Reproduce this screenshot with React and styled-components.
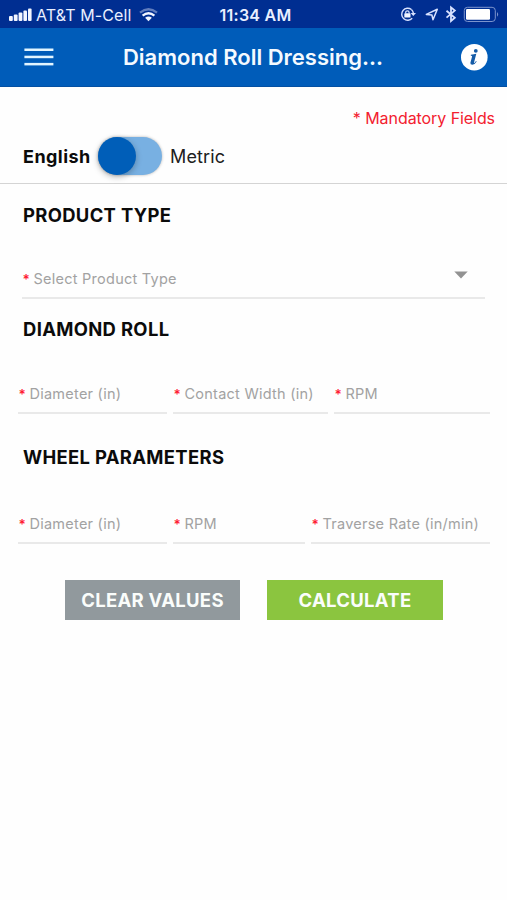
import React, { useState } from "react";
import styled, { createGlobalStyle } from "styled-components";

const GlobalStyle = createGlobalStyle`
  * { box-sizing: border-box; }
  body {
    margin: 0;
    background: #fefefe;
    color: #0b0b0b;
    font-family: Inter, "Liberation Sans", sans-serif;
  }
  button, input { font-family: inherit; }
`;

const Screen = styled.div`
  width: 507px;
  height: 900px;
  overflow: hidden;
  background: #fefefe;
`;

const StatusBar = styled.div`
  display: grid;
  grid-template-columns: 1fr auto 1fr;
  align-items: center;
  height: 28px;
  padding: 2px 7px 0 9px;
  background: #002e91;
  color: #e9efff;
`;

const StatusGroup = styled.div`
  display: flex;
  align-items: center;
  justify-content: ${(p) => (p.$end ? "flex-end" : "flex-start")};
`;

const Carrier = styled.span`
  margin: 0 8px 0 4px;
  font-size: 16px;
  line-height: 20px;
  letter-spacing: 0.1px;
  white-space: nowrap;
`;

const Clock = styled.span`
  padding-left: 2px;
  font-size: 16px;
  font-weight: 600;
  line-height: 20px;
  letter-spacing: 0.25px;
  white-space: nowrap;
`;

const Header = styled.header`
  display: flex;
  align-items: center;
  justify-content: space-between;
  height: 59px;
  padding: 0 19px 0 24px;
  background: #005cb9;
  border-bottom: 1px solid #0450a2;
  color: #f4faff;
`;

const IconButton = styled.button`
  display: flex;
  padding: 0;
  border: 0;
  background: none;
  color: inherit;
`;

const Title = styled.h1`
  margin: 0 8px 0 0;
  font-size: 22px;
  font-weight: 600;
  line-height: 30px;
  letter-spacing: 0;
  white-space: nowrap;
`;

const Notice = styled.p`
  height: 45px;
  margin: 0;
  padding: 21px 12px 0 0;
  color: #f3202f;
  font-size: 16px;
  line-height: 20px;
  letter-spacing: -0.07px;
  text-align: right;
`;

const UnitRow = styled.div`
  display: flex;
  align-items: center;
  height: 52px;
  padding: 0 0 4px 23px;
  border-bottom: 1px solid #d4d4d4;
`;

const UnitLabel = styled.span`
  width: ${(p) => (p.$strong ? "75px" : "auto")};
  padding-top: 2px;
  color: ${(p) => (p.$strong ? "#0b0b0b" : "#202020")};
  font-size: 18px;
  line-height: 24px;
  font-weight: ${(p) => (p.$strong ? 700 : 400)};
  letter-spacing: ${(p) => (p.$strong ? "0.45px" : "0.15px")};
`;

const Switch = styled.button`
  display: flex;
  justify-content: ${(p) => (p.$metric ? "flex-end" : "flex-start")};
  width: 64px;
  height: 38px;
  margin-right: 8px;
  padding: 0;
  border: 0;
  border-radius: 19px;
  background: #78b0e2;
  box-shadow: 0 0 3px rgba(0, 0, 0, 0.3);
`;

const Knob = styled.span`
  width: 38px;
  height: 38px;
  border-radius: 50%;
  background: #005eb8;
  box-shadow: 0 2px 6px rgba(0, 0, 0, 0.28);
`;

const Section = styled.section`
  height: ${(p) => p.$height}px;
  padding-top: ${(p) => p.$top}px;
`;

const SectionTitle = styled.h2`
  height: 24px;
  margin: 0 0 ${(p) => p.$gap}px 23px;
  font-size: 18.4px;
  font-weight: 650;
  line-height: 24px;
  letter-spacing: 0.35px;
`;

const FieldGrid = styled.div`
  display: grid;
  grid-template-columns: ${(p) => p.$columns};
  gap: 6px;
  margin-left: 18px;
`;

const Field = styled.label`
  display: flex;
  align-items: flex-start;
  height: 30px;
  border-bottom: 2px solid #e9e9e9;
  color: #a2a2a2;
  font-size: 14.5px;
  line-height: 20px;
  letter-spacing: 0.25px;
  white-space: nowrap;
`;

const SelectField = styled(Field)`
  width: 463px;
  margin-left: 22px;
  padding-right: 17px;
`;

const Required = styled.span`
  width: 11.5px;
  flex: none;
  padding-left: 0.5px;
  color: #ff1831;
  font-size: 13.5px;
  font-weight: 600;
  letter-spacing: 0;
`;

const Caret = styled.svg`
  margin: 2px 0 0 auto;
`;

const Actions = styled.div`
  display: flex;
  gap: 27px;
  margin-left: 65px;
`;

const ActionButton = styled.button`
  width: ${(p) => (p.$primary ? 176 : 175)}px;
  height: 40px;
  padding: 0;
  border: 0;
  background: ${(p) => (p.$primary ? "#8bc53f" : "#91999d")};
  color: #fafdfb;
  font-size: 18.5px;
  font-weight: 650;
  line-height: 41px;
  letter-spacing: 0.28px;
  white-space: nowrap;
`;

const Signal = () => (
  <svg width="23" height="14" viewBox="0 0 23 14" fill="#f2f6ff">
    <rect x="0" y="8" width="3.8" height="5" rx="1" />
    <rect x="4.8" y="6.5" width="3.8" height="6.5" rx="1" />
    <rect x="9.6" y="4.5" width="3.8" height="8.5" rx="1" />
    <rect x="14.4" y="2.5" width="3.6" height="10.5" rx="1" />
    <rect x="19" y="0.5" width="3.6" height="12.5" rx="1" />
  </svg>
);

const Wifi = () => (
  <svg width="19" height="14" viewBox="0 0 19 14" fill="none" stroke="#f2f6ff" strokeWidth="2.3">
    <path d="M1 4.6Q9.5-2 18 4.6" opacity="0.4" />
    <path d="M3.6 7.6Q9.5 2.8 15.4 7.6" />
    <path d="M6.1 9.8Q9.5 7 12.9 9.8L9.5 13.2Z" fill="#f2f6ff" stroke="none" />
  </svg>
);

const DeviceIcons = () => (
  <svg width="100" height="20" viewBox="400 5 100 20" fill="none" stroke="#d8e2ff">
    <path d="M411.4 9.5A6 6 0 1 0 412.2 18.2" strokeWidth="1.4" />
    <path d="M411.4 9.5A6 6 0 0 1 413.4 13.4" strokeWidth="1.4" />
    <path d="M410.6 13h5.4l-2.7 3.1z" fill="#d8e2ff" stroke="none" />
    <rect x="404.3" y="13.3" width="6.2" height="4.3" rx="0.6" fill="#f2f6ff" stroke="none" />
    <path d="M405.7 13.8v-1.3a1.7 1.7 0 0 1 3.4 0V13.8" strokeWidth="1.2" />
    <path d="M426.3 14.4L437.3 9.3L433 19.8L431.9 15Z" strokeWidth="1.5" strokeLinejoin="round" />
    <path d="M446.5 10.8L454.8 17.8L451 21V7.4L454.8 10.6L446.5 17.6" strokeWidth="1.8" />
    <rect x="464.3" y="7.3" width="31" height="14.2" rx="3.2" stroke="#7c94cd" strokeWidth="1" />
    <rect x="466" y="9.1" width="24" height="10.7" rx="1.2" fill="#fff" stroke="none" />
    <path d="M497 12q2.4 2.4 0 4.8z" fill="#7c94cd" stroke="none" />
  </svg>
);

const MenuIcon = () => (
  <svg width="30" height="20" viewBox="0 0 30 20" fill="#e2f5ff">
    <rect x="0.4" y="1.5" width="29" height="2.5" />
    <rect x="0.4" y="8.7" width="29" height="2.5" />
    <rect x="0.4" y="15.9" width="29" height="2.5" />
  </svg>
);

const InfoIcon = () => (
  <svg width="28" height="28" viewBox="0 0 28 28">
    <circle cx="14.3" cy="14.2" r="13.3" fill="#fff" />
    <ellipse cx="15.8" cy="7.9" rx="1.9" ry="1.8" fill="#145ba7" />
    <path
      d="M10.9 11.8Q13.9 11.5 16.3 10.8L14.1 19.2Q13.8 20.3 14.7 19.7Q15.3 19.1 16 18.1L16.7 18.6Q14.8 21.8 12.4 21.8Q10 21.7 10.4 19.7L12.1 13.6Q12.3 12.6 10.8 12.7Z"
      fill="#145ba7"
    />
  </svg>
);

function InputField({ label }) {
  return (
    <Field>
      <Required>*</Required>
      {label}
    </Field>
  );
}

export default function App() {
  const [metric, setMetric] = useState(false);

  return (
    <Screen>
      <GlobalStyle />
      <StatusBar>
        <StatusGroup>
          <Signal />
          <Carrier>AT&amp;T M-Cell</Carrier>
          <Wifi />
        </StatusGroup>
        <Clock>11:34 AM</Clock>
        <StatusGroup $end>
          <DeviceIcons />
        </StatusGroup>
      </StatusBar>
      <Header>
        <IconButton aria-label="Menu"><MenuIcon /></IconButton>
        <Title>Diamond Roll Dressing...</Title>
        <IconButton aria-label="Information"><InfoIcon /></IconButton>
      </Header>
      <Notice>* Mandatory Fields</Notice>
      <UnitRow>
        <UnitLabel $strong>English</UnitLabel>
        <Switch $metric={metric} onClick={() => setMetric(!metric)} aria-label="Units">
          <Knob />
        </Switch>
        <UnitLabel>Metric</UnitLabel>
      </UnitRow>
      <Section $height={114} $top={19}>
        <SectionTitle $gap={42}>PRODUCT TYPE</SectionTitle>
        <SelectField>
          <Required>*</Required>
          Select Product Type
          <Caret width="14" height="8" viewBox="0 0 14 8">
            <path d="M0.3 0.6H13.7L7 7.5Z" fill="#929292" />
          </Caret>
        </SelectField>
      </Section>
      <Section $height={115} $top={19}>
        <SectionTitle $gap={43}>DIAMOND ROLL</SectionTitle>
        <FieldGrid $columns="149px 155px 156px">
          <InputField label="Diameter (in)" />
          <InputField label="Contact Width (in)" />
          <InputField label="RPM" />
        </FieldGrid>
      </Section>
      <Section $height={167} $top={32}>
        <SectionTitle $gap={45}>WHEEL PARAMETERS</SectionTitle>
        <FieldGrid $columns="149px 132px 179px">
          <InputField label="Diameter (in)" />
          <InputField label="RPM" />
          <InputField label="Traverse Rate (in/min)" />
        </FieldGrid>
      </Section>
      <Actions>
        <ActionButton>CLEAR VALUES</ActionButton>
        <ActionButton $primary>CALCULATE</ActionButton>
      </Actions>
    </Screen>
  );
}
